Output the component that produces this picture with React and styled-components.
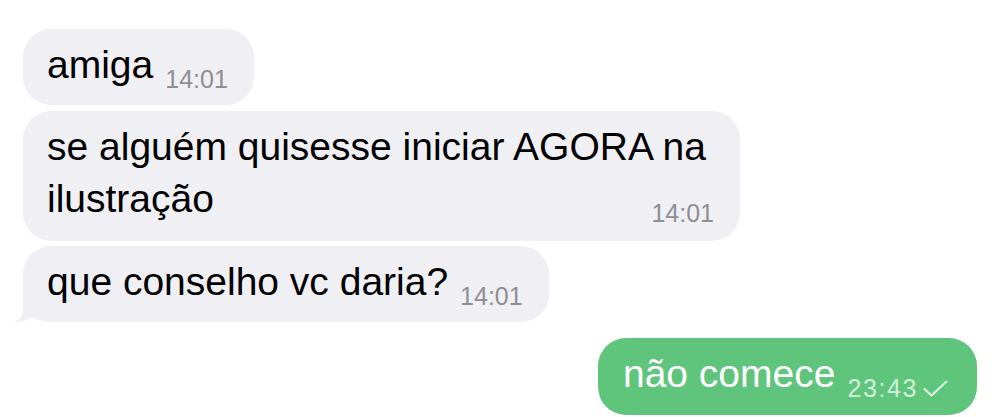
import React from "react";
import styled, { createGlobalStyle } from "styled-components";

const GlobalStyle = createGlobalStyle`
  html, body {
    margin: 0;
    padding: 0;
    background: #ffffff;
  }
  body {
    font-family: "Liberation Sans", Arial, sans-serif;
  }
`;

const colors = {
  incoming: "#efeff4",
  outgoing: "#5fc57c",
  text: "#000000",
  time: "#8e8e93",
  outTime: "rgba(255, 255, 255, 0.72)",
};

const Chat = styled.div`
  width: 1000px;
  height: 417px;
  box-sizing: border-box;
  padding: 29px 23px 0 23px;
  display: flex;
  flex-direction: column;
  overflow: hidden;
`;

const Bubble = styled.div`
  position: relative;
  align-self: ${(p) => (p.$out ? "flex-end" : "flex-start")};
  box-sizing: border-box;
  width: ${(p) => (p.$width ? `${p.$width}px` : "auto")};
  margin-top: ${(p) => p.$gap || 0}px;
  padding: 10px ${(p) => (p.$out ? 29 : 26)}px ${(p) => (p.$stacked ? 16 : p.$out ? 15 : 14)}px
    ${(p) => (p.$out ? 25 : 24)}px;
  border-radius: 28px;
  background: ${(p) => (p.$out ? colors.outgoing : colors.incoming)};
  color: ${(p) => (p.$out ? "#ffffff" : colors.text)};
  display: flex;
  flex-direction: column;
`;

const Line = styled.div`
  position: relative;
  z-index: 1;
  display: flex;
  align-items: flex-end;
  justify-content: space-between;
`;

const Text = styled.span`
  font-size: 39px;
  line-height: 52px;
  white-space: nowrap;
`;

const Meta = styled.span`
  display: flex;
  align-items: center;
  gap: 5px;
  margin-left: 12px;
  font-size: 25px;
  line-height: 24px;
  letter-spacing: ${(p) => (p.$out ? "1.6px" : "0")};
  color: ${(p) => (p.$out ? colors.outTime : colors.time)};
  white-space: nowrap;
`;

const Tail = styled.svg`
  position: absolute;
  left: -11px;
  bottom: 0;
  width: 46px;
  height: 30px;
`;

const Check = () => (
  <svg width="25" height="17" viewBox="0 0 25 17" fill="none">
    <path
      d="M1.5 9 L8.5 15.5 L23.5 1.5"
      stroke="rgba(255,255,255,0.8)"
      strokeWidth="2"
      strokeLinecap="round"
      strokeLinejoin="round"
    />
  </svg>
);

const Message = ({ lines, time, out, width, gap, tail }) => {
  const stacked = lines.length > 1;
  const last = lines[lines.length - 1];
  return (
    <Bubble $out={out} $stacked={stacked} $width={width} $gap={gap}>
      {tail && (
        <Tail viewBox="0 0 46 30">
          <path
            d="M11 0 L11 19 C11 25 7 28.5 1 29.5 C8 30.5 15 28.5 20 25 C24 28 31 30 46 30 L46 0 Z"
            fill={colors.incoming}
          />
        </Tail>
      )}
      {lines.slice(0, -1).map((l) => (
        <Line key={l}>
          <Text>{l}</Text>
        </Line>
      ))}
      <Line>
        <Text>{last}</Text>
        <Meta $out={out}>
          {time}
          {out && <Check />}
        </Meta>
      </Line>
    </Bubble>
  );
};

export default function App() {
  return (
    <>
      <GlobalStyle />
      <Chat>
        <Message lines={["amiga"]} time="14:01" />
        <Message
          lines={["se alguém quisesse iniciar AGORA na", "ilustração"]}
          time="14:01"
          width={717}
          gap={6}
        />
        <Message lines={["que conselho vc daria?"]} time="14:01" gap={5} tail />
        <Message lines={["não comece"]} time="23:43" out gap={16} />
      </Chat>
    </>
  );
}
